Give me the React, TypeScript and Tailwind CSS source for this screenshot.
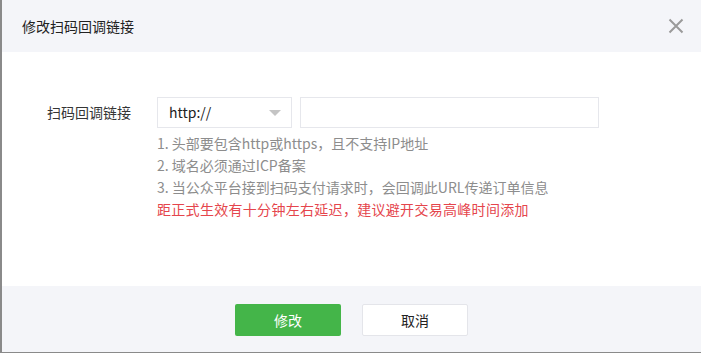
export default function App() {
  const font = { fontFamily: '"Microsoft YaHei", "Noto Sans CJK SC", "Liberation Sans", sans-serif' };
  return (
    <div className="w-[701px] h-[353px] bg-white border-l-2 border-b border-[#8a8a8a] flex flex-col" style={font}>
      <div className="h-[52px] bg-[#f4f5f9] flex items-center justify-between pl-[20px] pr-[17px]">
        <span className="text-[14px] text-[#222]">修改扫码回调链接</span>
        <svg width="16" height="16" viewBox="0 0 16 16">
          <path d="M1.5 1.5 L14.5 14.5 M14.5 1.5 L1.5 14.5" stroke="#9a9a9a" strokeWidth="2" />
        </svg>
      </div>
      <div className="flex-1 flex pt-[45px] pl-[45px]">
        <div className="w-[110px] h-[31px] flex items-center text-[14px] text-[#353535]">扫码回调链接</div>
        <div className="flex flex-col">
          <div className="flex gap-[8px]">
            <div className="w-[135px] h-[31px] border border-[#e6e7ec] flex items-center justify-between pl-[11px] pr-[10px]">
              <span className="text-[14px] text-[#222]">http://</span>
              <span className="w-0 h-0 border-l-[6px] border-r-[6px] border-t-[6px] border-l-transparent border-r-transparent border-t-[#c4c4c4]" />
            </div>
            <div className="w-[299px] h-[31px] border border-[#e6e7ec]" />
          </div>
          <div className="mt-[4px] text-[14px] leading-[22px] text-[#8d8d8d]">
            <div>1. 头部要包含http或https，且不支持IP地址</div>
            <div>2. 域名必须通过ICP备案</div>
            <div>3. 当公众平台接到扫码支付请求时，会回调此URL传递订单信息</div>
            <div className="text-[#e5454c] tracking-[0.3px]">距正式生效有十分钟左右延迟，建议避开交易高峰时间添加</div>
          </div>
        </div>
      </div>
      <div className="h-[66px] bg-[#f4f5f9] flex justify-center gap-[21px] pt-[18px]">
        <button className="w-[106px] h-[32px] bg-[#44b549] rounded-[2px] text-white text-[14px]">修改</button>
        <button className="w-[106px] h-[32px] bg-white border border-[#e4e5ea] rounded-[2px] text-[#222] text-[14px]">取消</button>
      </div>
    </div>
  );
}
